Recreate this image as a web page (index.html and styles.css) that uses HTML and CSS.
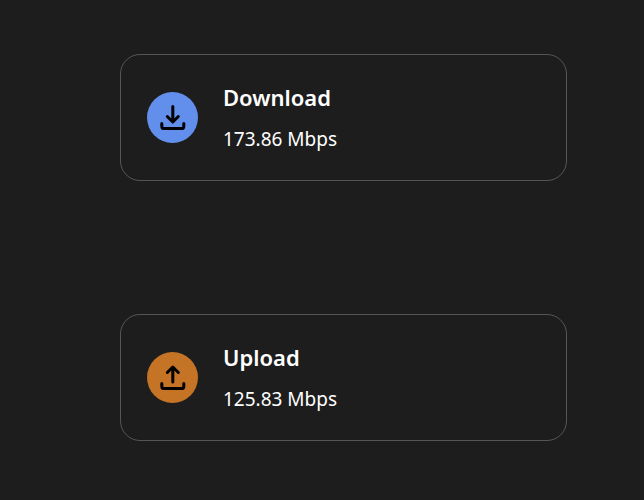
FILE: index.html
```html
<!DOCTYPE html>
<html lang="en">
<head>
<meta charset="utf-8">
<title>Network speed</title>
<link rel="stylesheet" href="styles.css">
</head>
<body>
<main class="speeds">
  <section class="card">
    <svg class="icon icon-download" viewBox="0 0 51 51" aria-hidden="true">
      <circle cx="25.5" cy="25.5" r="25.5"/>
      <path d="M25.8 14.5V29.5M20.3 24.5L25.8 30L31.3 24.5M14.8 31.5V34.2Q14.8 36.6 17.2 36.6H34.4Q36.8 36.6 36.8 34.2V31.5"/>
    </svg>
    <div class="text">
      <h2 class="title">Download</h2>
      <p class="value">173.86 Mbps</p>
    </div>
  </section>
  <section class="card">
    <svg class="icon icon-upload" viewBox="0 0 51 51" aria-hidden="true">
      <circle cx="25.5" cy="25.5" r="25.5"/>
      <path d="M25.8 30V15.5M20.3 20.5L25.8 15L31.3 20.5M14.8 31.5V34.2Q14.8 36.6 17.2 36.6H34.4Q36.8 36.6 36.8 34.2V31.5"/>
    </svg>
    <div class="text">
      <h2 class="title">Upload</h2>
      <p class="value">125.83 Mbps</p>
    </div>
  </section>
</main>
</body>
</html>
```
FILE: styles.css
```css
* {
  box-sizing: border-box;
}

body {
  margin: 0;
  min-height: 100vh;
  background: #1d1d1d;
  color: #fff;
  font-family: "Noto Sans", sans-serif;
}

.speeds {
  display: flex;
  flex-direction: column;
  gap: 133px;
  padding: 54px 77px 54px 120px;
}

.card {
  display: flex;
  align-items: center;
  gap: 25px;
  padding: 24px 26px;
  border: 1px solid #565656;
  border-radius: 20px;
}

.icon {
  flex: none;
  width: 51px;
  height: 51px;
}

.icon-download {
  fill: #628eec;
}

.icon-upload {
  fill: #c57325;
}

.icon path {
  fill: none;
  stroke: #000;
  stroke-width: 3;
  stroke-linecap: round;
  stroke-linejoin: round;
}

.text {
  padding-bottom: 2px;
}

.title {
  margin: 0 0 9px;
  font-size: 22px;
  font-weight: 600;
  line-height: 36px;
}

.value {
  margin: 0;
  font-size: 19px;
  line-height: 30px;
}
```
